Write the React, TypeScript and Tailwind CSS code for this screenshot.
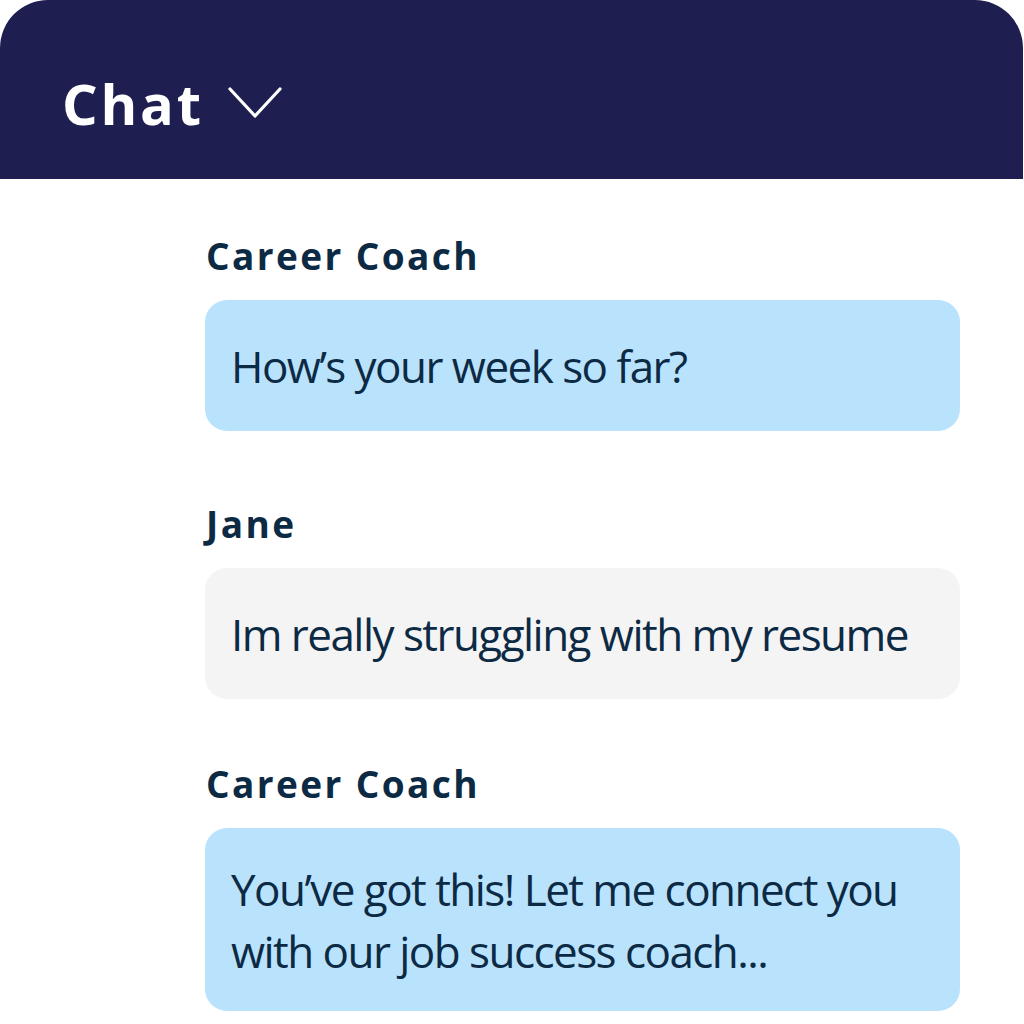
interface Message {
  author: string
  lines: string[]
  fromCoach: boolean
  spacing: string
}

const messages: Message[] = [
  { author: "Career Coach", lines: ["How’s your week so far?"], fromCoach: true, spacing: "" },
  {
    author: "Jane",
    lines: ["Im really struggling with my resume"],
    fromCoach: false,
    spacing: "mt-[71px]",
  },
  {
    author: "Career Coach",
    lines: ["You’ve got this! Let me connect you", "with our job success coach..."],
    fromCoach: true,
    spacing: "mt-[63px]",
  },
]

function ChatMessage({ author, lines, fromCoach, spacing }: Message) {
  return (
    <div className={`flex flex-col ${spacing}`}>
      <div className="text-[37px] leading-[44px] font-bold tracking-[0.065em] text-[#0d2a45] pl-px">
        {author}
      </div>
      <div
        className={`mt-[22px] rounded-[22px] px-[26px] ${
          fromCoach ? "bg-[#b9e3fd]" : "bg-[#f4f4f4]"
        } ${lines.length > 1 ? "py-[29.5px]" : "py-[34.5px]"}`}
      >
        {lines.map((line) => (
          <div
            key={line}
            className="text-[44px] leading-[62px] tracking-[-0.035em] text-[#0d2a45] whitespace-nowrap"
          >
            {line}
          </div>
        ))}
      </div>
    </div>
  )
}

export default function App() {
  return (
    <div className="w-[1024px] h-[1024px] bg-white overflow-hidden font-['Open_Sans',sans-serif]">
      <div className="h-[179px] w-[1023px] bg-[#1f1e50] rounded-t-[48px] flex items-center pl-[62px] pt-[26px] gap-[23px]">
        <span className="text-[56px] font-bold tracking-[0.05em] text-white leading-none">Chat</span>
        {/* dropdown chevron */}
        <svg width="56" height="34" viewBox="0 0 56 34" fill="none">
          <polyline
            points="3,3 28,30 53,3"
            stroke="white"
            strokeWidth="3.2"
            strokeLinecap="round"
            strokeLinejoin="round"
          />
        </svg>
      </div>
      <div className="flex flex-col pl-[205px] pr-[64px] pt-[55px]">
        {messages.map((m, i) => (
          <ChatMessage key={i} {...m} />
        ))}
      </div>
    </div>
  )
}
